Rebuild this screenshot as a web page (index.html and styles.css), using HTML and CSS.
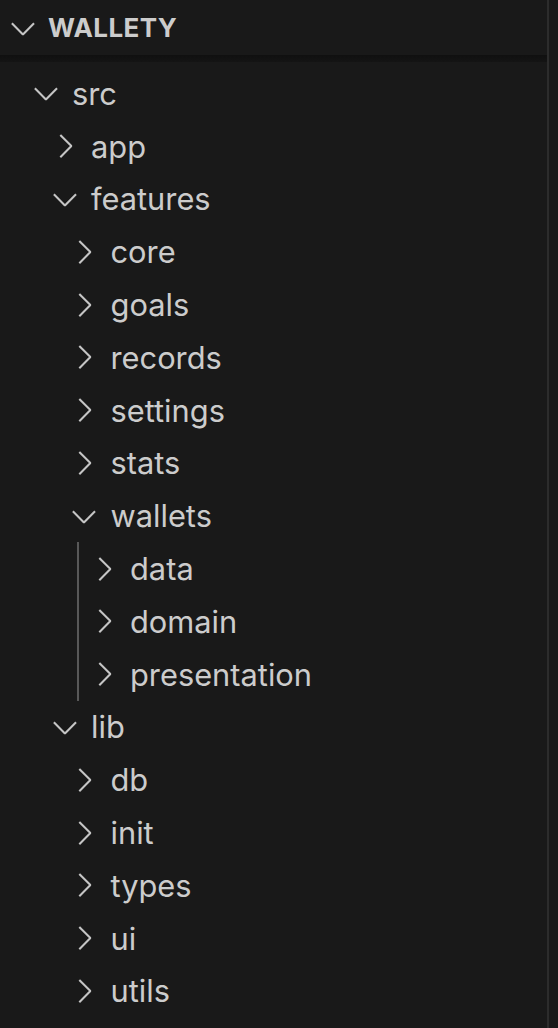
FILE: index.html
```html
<!DOCTYPE html>
<html>
<head>
<meta charset="utf-8">
<link rel="stylesheet" href="styles.css">
</head>
<body>
<div class="explorer">
  <div class="pane">
    <div class="header">
      <svg class="chev" viewBox="0 0 16 16"><path d="M7.976 10.072l4.357-4.357.62.618L8.284 11h-.618L3 6.333l.619-.618 4.357 4.357z"/></svg>
      <span class="title">WALLETY</span>
    </div>
    <div class="shadow"></div>
    <div class="tree">
      <div class="row d0"><svg class="chev" viewBox="0 0 16 16"><path d="M7.976 10.072l4.357-4.357.62.618L8.284 11h-.618L3 6.333l.619-.618 4.357 4.357z"/></svg><span class="label">src</span></div>
      <div class="row d1"><svg class="chev" viewBox="0 0 16 16"><path d="M10.072 8.024L5.715 3.667l.618-.62L11 7.716v.618L6.333 13l-.618-.619 4.357-4.357z"/></svg><span class="label">app</span></div>
      <div class="row d1"><svg class="chev" viewBox="0 0 16 16"><path d="M7.976 10.072l4.357-4.357.62.618L8.284 11h-.618L3 6.333l.619-.618 4.357 4.357z"/></svg><span class="label">features</span></div>
      <div class="row d2"><svg class="chev" viewBox="0 0 16 16"><path d="M10.072 8.024L5.715 3.667l.618-.62L11 7.716v.618L6.333 13l-.618-.619 4.357-4.357z"/></svg><span class="label">core</span></div>
      <div class="row d2"><svg class="chev" viewBox="0 0 16 16"><path d="M10.072 8.024L5.715 3.667l.618-.62L11 7.716v.618L6.333 13l-.618-.619 4.357-4.357z"/></svg><span class="label">goals</span></div>
      <div class="row d2"><svg class="chev" viewBox="0 0 16 16"><path d="M10.072 8.024L5.715 3.667l.618-.62L11 7.716v.618L6.333 13l-.618-.619 4.357-4.357z"/></svg><span class="label">records</span></div>
      <div class="row d2"><svg class="chev" viewBox="0 0 16 16"><path d="M10.072 8.024L5.715 3.667l.618-.62L11 7.716v.618L6.333 13l-.618-.619 4.357-4.357z"/></svg><span class="label">settings</span></div>
      <div class="row d2"><svg class="chev" viewBox="0 0 16 16"><path d="M10.072 8.024L5.715 3.667l.618-.62L11 7.716v.618L6.333 13l-.618-.619 4.357-4.357z"/></svg><span class="label">stats</span></div>
      <div class="row d2"><svg class="chev" viewBox="0 0 16 16"><path d="M7.976 10.072l4.357-4.357.62.618L8.284 11h-.618L3 6.333l.619-.618 4.357 4.357z"/></svg><span class="label">wallets</span></div>
      <div class="group">
        <div class="guide"></div>
        <div class="row d3"><svg class="chev" viewBox="0 0 16 16"><path d="M10.072 8.024L5.715 3.667l.618-.62L11 7.716v.618L6.333 13l-.618-.619 4.357-4.357z"/></svg><span class="label">data</span></div>
        <div class="row d3"><svg class="chev" viewBox="0 0 16 16"><path d="M10.072 8.024L5.715 3.667l.618-.62L11 7.716v.618L6.333 13l-.618-.619 4.357-4.357z"/></svg><span class="label">domain</span></div>
        <div class="row d3"><svg class="chev" viewBox="0 0 16 16"><path d="M10.072 8.024L5.715 3.667l.618-.62L11 7.716v.618L6.333 13l-.618-.619 4.357-4.357z"/></svg><span class="label">presentation</span></div>
      </div>
      <div class="row d1"><svg class="chev" viewBox="0 0 16 16"><path d="M7.976 10.072l4.357-4.357.62.618L8.284 11h-.618L3 6.333l.619-.618 4.357 4.357z"/></svg><span class="label">lib</span></div>
      <div class="row d2"><svg class="chev" viewBox="0 0 16 16"><path d="M10.072 8.024L5.715 3.667l.618-.62L11 7.716v.618L6.333 13l-.618-.619 4.357-4.357z"/></svg><span class="label">db</span></div>
      <div class="row d2"><svg class="chev" viewBox="0 0 16 16"><path d="M10.072 8.024L5.715 3.667l.618-.62L11 7.716v.618L6.333 13l-.618-.619 4.357-4.357z"/></svg><span class="label">init</span></div>
      <div class="row d2"><svg class="chev" viewBox="0 0 16 16"><path d="M10.072 8.024L5.715 3.667l.618-.62L11 7.716v.618L6.333 13l-.618-.619 4.357-4.357z"/></svg><span class="label">types</span></div>
      <div class="row d2"><svg class="chev" viewBox="0 0 16 16"><path d="M10.072 8.024L5.715 3.667l.618-.62L11 7.716v.618L6.333 13l-.618-.619 4.357-4.357z"/></svg><span class="label">ui</span></div>
      <div class="row d2"><svg class="chev" viewBox="0 0 16 16"><path d="M10.072 8.024L5.715 3.667l.618-.62L11 7.716v.618L6.333 13l-.618-.619 4.357-4.357z"/></svg><span class="label">utils</span></div>
    </div>
  </div>
  <div class="sash"></div>
  <div class="edge"></div>
</div>
</body>
</html>
```

FILE: styles.css
```css
html, body {
  margin: 0;
  padding: 0;
  background: #191919;
}
body {
  width: 558px;
  height: 1028px;
  overflow: hidden;
  font-family: Inter, "Noto Sans", sans-serif;
  color: #cccccc;
}
.explorer {
  display: flex;
  height: 1028px;
}
.pane {
  width: 547px;
  display: flex;
  flex-direction: column;
}
.sash {
  width: 2px;
  background: #2c2c2c;
}
.edge {
  flex: 1;
}
.header {
  height: 55px;
  display: flex;
  align-items: center;
  padding-left: 4px;
}
.chev {
  width: 38px;
  height: 38px;
  fill: #c5c5c5;
  flex: none;
}
.header .chev {
  margin-right: 6px;
}
.title {
  font-weight: 700;
  font-size: 26px;
  letter-spacing: 0.4px;
  color: #cccccc;
}
.shadow {
  height: 7px;
  background: linear-gradient(#101010, #141414);
}
.tree {
  padding-top: 5px;
}
.row {
  height: 52.8px;
  display: flex;
  align-items: center;
}
.row .chev {
  margin-right: 7.5px;
}
.label {
  font-size: 30.8px;
  white-space: nowrap;
}
.d0 { padding-left: 26.5px; }
.d1 { padding-left: 45.5px; }
.d2 { padding-left: 65px; }
.d3 { padding-left: 84.5px; }
.group {
  position: relative;
}
.guide {
  position: absolute;
  left: 77px;
  top: 0;
  bottom: 0;
  width: 2px;
  background: #585858;
}
```
